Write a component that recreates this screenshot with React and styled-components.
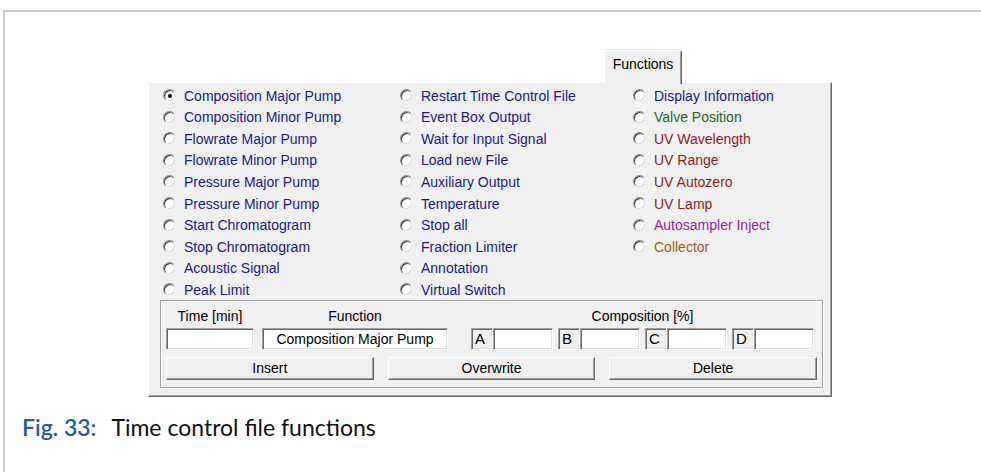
import styled, { createGlobalStyle } from 'styled-components';

const GlobalStyle = createGlobalStyle`
	html, body {
		margin: 0;
		padding: 0;
		background: #ffffff;
	}

	body {
		font-family: 'Liberation Sans', Arial, sans-serif;
		overflow: hidden;
	}
`;

const COLUMNS = [
	[
		{ label: 'Composition Major Pump', checked: true },
		{ label: 'Composition Minor Pump' },
		{ label: 'Flowrate Major Pump' },
		{ label: 'Flowrate Minor Pump' },
		{ label: 'Pressure Major Pump' },
		{ label: 'Pressure Minor Pump' },
		{ label: 'Start Chromatogram' },
		{ label: 'Stop Chromatogram' },
		{ label: 'Acoustic Signal' },
		{ label: 'Peak Limit' },
	],
	[
		{ label: 'Restart Time Control File' },
		{ label: 'Event Box Output' },
		{ label: 'Wait for Input Signal' },
		{ label: 'Load new File' },
		{ label: 'Auxiliary Output' },
		{ label: 'Temperature' },
		{ label: 'Stop all' },
		{ label: 'Fraction Limiter' },
		{ label: 'Annotation' },
		{ label: 'Virtual Switch' },
	],
	[
		{ label: 'Display Information' },
		{ label: 'Valve Position', color: '#246b24' },
		{ label: 'UV Wavelength', color: '#8f1c1c' },
		{ label: 'UV Range', color: '#8f1c1c' },
		{ label: 'UV Autozero', color: '#8f1c1c' },
		{ label: 'UV Lamp', color: '#8f1c1c' },
		{ label: 'Autosampler Inject', color: '#9c1ca0' },
		{ label: 'Collector', color: '#a65b13' },
	],
];

const Frame = styled.div`
	margin: 10px 0 0 3px;
	min-height: 462px;
	box-sizing: border-box;
	border-top: 2px solid #cccccc;
	border-left: 2px solid #cccccc;
	padding-top: 38px;
`;

const Dialog = styled.div`
	margin-left: 143px;
	width: 684px;
	font-size: 14px;
`;

const TabStrip = styled.div`
	display: flex;
	height: 32px;
`;

const Tab = styled.div`
	position: relative;
	z-index: 1;
	margin-left: 456px;
	margin-bottom: -2px;
	width: 78px;
	box-sizing: border-box;
	padding-top: 5px;
	text-align: center;
	color: #000000;
	background: #f0f0f0;
	border-top: 1px solid #ffffff;
	border-left: 1px solid #ffffff;
	border-right: 1px solid #696969;
	box-shadow: inset -1px 0 #a0a0a0, 0 -1px #e3e3e3;
	border-radius: 2px 2px 0 0;
`;

const Panel = styled.div`
	height: 315px;
	box-sizing: border-box;
	background: #f0f0f0;
	border-top: 1px solid #ffffff;
	border-left: 1px solid #ffffff;
	border-right: 1px solid #696969;
	border-bottom: 1px solid #696969;
	box-shadow: inset -1px -1px #a0a0a0;
	padding: 2px 0 0 14px;
`;

const Options = styled.div`
	display: grid;
	grid-template-columns: 237px 233px 1fr;
`;

const OptionColumn = styled.div`
	display: flex;
	flex-direction: column;
`;

const Option = styled.label`
	display: flex;
	align-items: center;
	gap: 8px;
	height: 21.55px;
	color: ${({ $color }) => $color || '#1a1a8e'};
	white-space: nowrap;
`;

const Radio = styled.span`
	position: relative;
	flex: none;
	width: 13px;
	height: 13px;
	box-sizing: border-box;
	border-radius: 50%;
	background: #ffffff;
	border: 1px solid;
	border-color: #8a8a8a #f4f4f4 #f4f4f4 #8a8a8a;
	box-shadow: inset 1px 1px #3c3c3c, inset -1px -1px #d8d8d8;

	&::after {
		content: '';
		display: ${({ $checked }) => ($checked ? 'block' : 'none')};
		position: absolute;
		left: 3.5px;
		top: 3.5px;
		width: 4px;
		height: 4px;
		border-radius: 50%;
		background: #000000;
	}
`;

const GroupBox = styled.div`
	margin-left: -3px;
	width: 663px;
	height: 88px;
	box-sizing: border-box;
	border: 1px solid #a0a0a0;
	box-shadow: inset 1px 1px #ffffff, 1px 1px #ffffff;
	padding: 7px 8px 0 5px;
	color: #000000;
`;

const FieldRow = styled.div`
	display: grid;
	grid-template-columns: 88px 186px 1fr;
	column-gap: 8px;

	& > :nth-child(3n) {
		margin-left: 15px;
	}
`;

const FieldLabel = styled.div`
	height: 16px;
	line-height: 16px;
	text-align: center;
	margin-bottom: 4px;
`;

const TextBox = styled.div`
	height: 22px;
	box-sizing: border-box;
	line-height: 20px;
	text-align: ${({ $align }) => $align || 'left'};
	background: ${({ $fill }) => $fill || '#ffffff'};
	border: 1px solid;
	border-color: #a0a0a0 #ffffff #ffffff #a0a0a0;
	box-shadow: inset 1px 1px #696969, inset -1px -1px #e3e3e3;
	padding: 0 3px;
	font-size: ${({ $large }) => ($large ? '15px' : 'inherit')};
`;

const CompositionRow = styled.div`
	display: grid;
	grid-template-columns: repeat(4, 1fr);
	column-gap: 5px;
`;

const CompositionCell = styled.div`
	display: grid;
	grid-template-columns: 22px 1fr;
`;

const ButtonRow = styled.div`
	display: grid;
	grid-template-columns: repeat(3, 1fr);
	column-gap: 14px;
	width: 651px;
	margin-top: 7px;
`;

const Button = styled.div`
	height: 23px;
	box-sizing: border-box;
	line-height: 21px;
	text-align: center;
	background: #f0f0f0;
	border: 1px solid;
	border-color: #ffffff #696969 #696969 #ffffff;
	box-shadow: inset -1px -1px #a0a0a0;
`;

const Caption = styled.div`
	margin: 17px 0 0 17px;
	font-family: Lato, 'Open Sans', sans-serif;
	font-size: 23px;
	line-height: 26px;
	color: #111111;

	strong {
		color: #1f5ca6;
		font-weight: 600;
		margin-right: 15px;
	}
`;

export default function App() {
	return (
		<>
			<GlobalStyle />
			<Frame>
				<Dialog>
					<TabStrip>
						<Tab>Functions</Tab>
					</TabStrip>
					<Panel>
						<Options>
							{COLUMNS.map((column, i) => (
								<OptionColumn key={i}>
									{column.map((item) => (
										<Option key={item.label} $color={item.color}>
											<Radio $checked={item.checked} />
											{item.label}
										</Option>
									))}
								</OptionColumn>
							))}
						</Options>
						<GroupBox>
							<FieldRow>
								<FieldLabel>Time [min]</FieldLabel>
								<FieldLabel>Function</FieldLabel>
								<FieldLabel>Composition [%]</FieldLabel>
								<TextBox />
								<TextBox $align="center">Composition Major Pump</TextBox>
								<CompositionRow>
									{['A', 'B', 'C', 'D'].map((letter) => (
										<CompositionCell key={letter}>
											<TextBox $fill="#f0f0f0" $large>
												{letter}
											</TextBox>
											<TextBox />
										</CompositionCell>
									))}
								</CompositionRow>
							</FieldRow>
							<ButtonRow>
								<Button>Insert</Button>
								<Button>Overwrite</Button>
								<Button>Delete</Button>
							</ButtonRow>
						</GroupBox>
					</Panel>
				</Dialog>
				<Caption>
					<strong>Fig. 33:</strong>Time control file functions
				</Caption>
			</Frame>
		</>
	);
}
